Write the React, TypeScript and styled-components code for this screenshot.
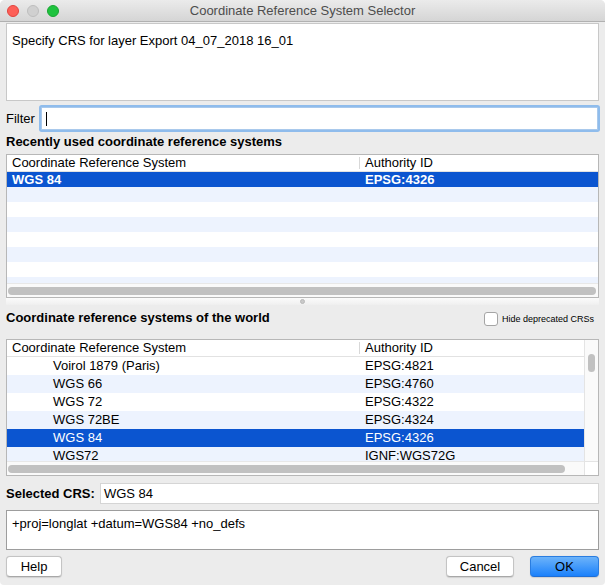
import React from 'react';
import styled, { createGlobalStyle } from 'styled-components';

const GlobalStyle = createGlobalStyle`
  html, body {
    margin: 0;
    padding: 0;
    background: #ffffff;
  }
  * {
    box-sizing: border-box;
  }
`;

const Window = styled.div`
  width: 605px;
  height: 585px;
  background: #ececec;
  border-radius: 5px 5px 4px 4px;
  overflow: hidden;
  display: flex;
  flex-direction: column;
  font-family: 'Liberation Sans', Arial, sans-serif;
  font-size: 13px;
  color: #000;
`;

const TitleBar = styled.div`
  height: 22px;
  flex-shrink: 0;
  display: flex;
  align-items: center;
  position: relative;
  background: linear-gradient(#ebebeb, #d5d5d5);
  border-bottom: 1px solid #b1b1b1;
`;

const Lights = styled.div`
  display: flex;
  gap: 8px;
  padding-left: 7px;
`;

const Light = styled.span<{ $fill: string; $ring: string }>`
  width: 12px;
  height: 12px;
  border-radius: 50%;
  background: ${(p) => p.$fill};
  border: 0.5px solid ${(p) => p.$ring};
`;

const Title = styled.div`
  position: absolute;
  left: 0;
  right: 0;
  text-align: center;
  font-size: 13px;
  color: #4d4d4d;
  pointer-events: none;
`;

const Content = styled.div`
  flex: 1;
  display: flex;
  flex-direction: column;
  padding: 1px 6px 0 6px;
`;

const MessageBox = styled.div`
  height: 78px;
  background: #fff;
  border: 1px solid #c8c8c8;
  padding: 9px 5px;
`;

const FilterRow = styled.div`
  display: flex;
  align-items: center;
  gap: 6px;
  margin-top: 6px;
`;

const FilterInput = styled.div`
  flex: 1;
  height: 23px;
  background: #fff;
  border: 1px solid #a9c9ec;
  box-shadow: 0 0 0 2px #8fbcec;
  border-radius: 1px;
  margin-right: 1px;
  display: flex;
  align-items: center;
  padding-left: 4px;
`;

const Caret = styled.span`
  width: 1px;
  height: 14px;
  background: #000;
`;

const SectionLabel = styled.div`
  font-weight: bold;
  height: 16px;
  line-height: 16px;
`;

const RecentLabel = styled(SectionLabel)`
  margin-top: 4px;
  margin-bottom: 4px;
`;

const Table = styled.div<{ $height: number }>`
  height: ${(p) => p.$height}px;
  background: #fff;
  border: 1px solid #b7b7b7;
  display: flex;
  overflow: hidden;
`;

const TableMain = styled.div`
  flex: 1;
  display: flex;
  flex-direction: column;
  min-width: 0;
`;

const Header = styled.div`
  height: 17px;
  flex-shrink: 0;
  display: grid;
  grid-template-columns: 352px 1fr;
  border-bottom: 1px solid #e2e2e2;
  background: #fff;
`;

const HeaderCell = styled.div<{ $divider?: boolean }>`
  padding-left: 5px;
  border-left: ${(p) => (p.$divider ? '1px solid #d8d8d8' : 'none')};
  margin: ${(p) => (p.$divider ? '2px 0' : '0')};
  line-height: ${(p) => (p.$divider ? '12px' : '16px')};
  white-space: nowrap;
`;

const Rows = styled.div`
  flex: 1;
  overflow: hidden;
`;

const Row = styled.div<{ $h: number; $alt?: boolean; $selected?: boolean }>`
  height: ${(p) => p.$h}px;
  line-height: ${(p) => p.$h}px;
  display: grid;
  grid-template-columns: 352px 1fr;
  background: ${(p) => (p.$selected ? '#0b55d0' : p.$alt ? '#edf3fe' : '#fff')};
  color: ${(p) => (p.$selected ? '#fff' : '#000')};
  font-weight: ${(p) => (p.$selected && p.$h < 17 ? 'bold' : 'normal')};
  white-space: nowrap;
`;

const Cell = styled.div<{ $indent?: number }>`
  padding-left: ${(p) => p.$indent ?? 6}px;
  overflow: hidden;
`;

const HScroll = styled.div`
  height: 14px;
  flex-shrink: 0;
  display: flex;
  align-items: center;
  padding: 0 2px 0 1px;
  background: #fafafa;
  border-top: 1px solid #e8e8e8;
`;

const Thumb = styled.div<{ $right: number }>`
  height: 8px;
  flex: 1;
  margin-right: ${(p) => p.$right}px;
  border-radius: 4px;
  background: #c1c1c1;
`;

const VScrollColumn = styled.div`
  width: 14px;
  flex-shrink: 0;
  display: flex;
  flex-direction: column;
  border-left: 1px solid #e4e4e4;
  background: #fafafa;
`;

const VTrack = styled.div`
  flex: 1;
  padding: 14px 3px 0 3px;
`;

const VThumb = styled.div`
  width: 7px;
  height: 18px;
  border-radius: 4px;
  background: #c1c1c1;
`;

const Corner = styled.div`
  height: 14px;
  border-top: 1px solid #e4e4e4;
  background: #fff;
`;

const Splitter = styled.div`
  height: 7px;
  display: flex;
  align-items: center;
  justify-content: center;
  background: linear-gradient(#fbfbfb, #efefef);
`;

const Dot = styled.span`
  width: 5px;
  height: 5px;
  border-radius: 50%;
  background: #c9c9c9;
  border: 1px solid #b9b9b9;
`;

const WorldHeader = styled.div`
  display: flex;
  align-items: center;
  justify-content: space-between;
  height: 26px;
  margin-bottom: 8px;
`;

const CheckLabel = styled.label`
  display: flex;
  align-items: center;
  gap: 4px;
  font-size: 9px;
  margin-right: 5px;
  margin-top: 1px;
`;

const CheckBox = styled.span`
  width: 14px;
  height: 14px;
  border-radius: 3px;
  border: 1px solid #a5a5a5;
  background: #fff;
`;

const SelectedRow = styled.div`
  display: flex;
  align-items: center;
  gap: 5px;
  margin-top: 7px;
`;

const SelectedLabel = styled.span`
  font-weight: bold;
`;

const SelectedField = styled.div`
  flex: 1;
  height: 21px;
  line-height: 19px;
  background: #fff;
  border: 1px solid #d5d5d5;
  padding-left: 3px;
`;

const ProjBox = styled.div`
  height: 40px;
  margin-top: 6px;
  background: #fff;
  border: 1px solid #9d9d9d;
  padding: 5px 5px;
`;

const ButtonRow = styled.div`
  display: flex;
  align-items: center;
  margin-top: 6px;
  gap: 16px;
`;

const Button = styled.button<{ $primary?: boolean; $w: number }>`
  width: ${(p) => p.$w}px;
  height: 21px;
  padding: 0;
  font-family: 'Liberation Sans', Arial, sans-serif;
  font-size: 13px;
  color: #000;
  border-radius: 4px;
  border: 1px solid ${(p) => (p.$primary ? '#2a7de0' : '#c4c4c4')};
  border-bottom-color: ${(p) => (p.$primary ? '#1f6fd6' : '#a8a8a8')};
  background: ${(p) =>
    p.$primary ? 'linear-gradient(#6cb3fa, #1b81fb)' : '#fff'};
  box-shadow: 0 0.5px 1px rgba(0, 0, 0, 0.12);
`;

const Spacer = styled.div`
  flex: 1;
`;

const worldRows = [
  { name: 'Voirol 1879 (Paris)', id: 'EPSG:4821' },
  { name: 'WGS 66', id: 'EPSG:4760' },
  { name: 'WGS 72', id: 'EPSG:4322' },
  { name: 'WGS 72BE', id: 'EPSG:4324' },
  { name: 'WGS 84', id: 'EPSG:4326', selected: true },
  { name: 'WGS72', id: 'IGNF:WGS72G' },
];

export default function App() {
  return (
    <>
      <GlobalStyle />
      <Window>
        <TitleBar>
          <Lights>
            <Light $fill="#fd5f57" $ring="#e0443e" />
            <Light $fill="#d0d0d0" $ring="#bdbdbd" />
            <Light $fill="#1fc33f" $ring="#1aa532" />
          </Lights>
          <Title>Coordinate Reference System Selector</Title>
        </TitleBar>
        <Content>
          <MessageBox>Specify CRS for layer Export 04_07_2018 16_01</MessageBox>

          <FilterRow>
            <span>Filter</span>
            <FilterInput>
              <Caret />
            </FilterInput>
          </FilterRow>

          <RecentLabel>Recently used coordinate reference systems</RecentLabel>
          <Table $height={144}>
            <TableMain>
              <Header>
                <HeaderCell>Coordinate Reference System</HeaderCell>
                <HeaderCell $divider>Authority ID</HeaderCell>
              </Header>
              <Rows>
                <Row $h={15} $selected>
                  <Cell $indent={5}>WGS 84</Cell>
                  <Cell>EPSG:4326</Cell>
                </Row>
                {Array.from({ length: 8 }).map((_, i) => (
                  <Row key={i} $h={15} $alt={i % 2 === 0}>
                    <Cell />
                    <Cell />
                  </Row>
                ))}
              </Rows>
              <HScroll>
                <Thumb $right={0} />
              </HScroll>
            </TableMain>
          </Table>
          <Splitter>
            <Dot />
          </Splitter>

          <WorldHeader>
            <SectionLabel>Coordinate reference systems of the world</SectionLabel>
            <CheckLabel>
              <CheckBox />
              Hide deprecated CRSs
            </CheckLabel>
          </WorldHeader>
          <Table $height={137}>
            <TableMain>
              <Header>
                <HeaderCell>Coordinate Reference System</HeaderCell>
                <HeaderCell $divider>Authority ID</HeaderCell>
              </Header>
              <Rows>
                {worldRows.map((r, i) => (
                  <Row key={r.name} $h={18} $alt={i % 2 === 1} $selected={r.selected}>
                    <Cell $indent={46}>{r.name}</Cell>
                    <Cell>{r.id}</Cell>
                  </Row>
                ))}
              </Rows>
              <HScroll>
                <Thumb $right={17} />
              </HScroll>
            </TableMain>
            <VScrollColumn>
              <VTrack>
                <VThumb />
              </VTrack>
              <Corner />
            </VScrollColumn>
          </Table>

          <SelectedRow>
            <SelectedLabel>Selected CRS:</SelectedLabel>
            <SelectedField>WGS 84</SelectedField>
          </SelectedRow>
          <ProjBox>+proj=longlat +datum=WGS84 +no_defs</ProjBox>

          <ButtonRow>
            <Button $w={56}>Help</Button>
            <Spacer />
            <Button $w={68}>Cancel</Button>
            <Button $w={69} $primary>
              OK
            </Button>
          </ButtonRow>
        </Content>
      </Window>
    </>
  );
}
